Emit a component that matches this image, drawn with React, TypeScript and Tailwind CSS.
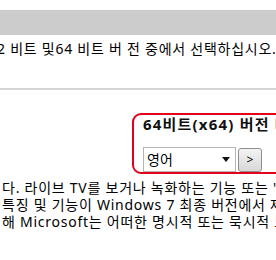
export default function App() {
  return (
    <div className="w-[276px] h-[260px] overflow-hidden bg-white text-black font-['Noto_Sans','Noto_Sans_CJK_KR',sans-serif]">
      <div className="h-[10px]" />
      <div className="h-[25px] bg-[#cccccc]" />
      <p className="mt-[5px] ml-[-3px] whitespace-nowrap text-[14px] leading-[17px] tracking-[0.75px]">
        2 비트 및64 비트 버 전 중에서 선택하십시오.
      </p>
      <div className="mt-[31px] h-[2px] bg-[#d4d4d4]" />
      <div className="mt-[23px] ml-[132px] w-[160px] h-[61px] rounded-[9px] border-2 border-[#e2001a] pl-[9px] pt-[1px]">
        <h3 className="whitespace-nowrap text-[15px] font-bold leading-[16px] tracking-[1.2px] text-[#111]">
          64비트(x64) 버전 다운로드
        </h3>
        <div className="mt-[15px] flex items-center gap-[2px]">
          <div className="flex h-[25px] w-[93px] items-center justify-between border border-[#b5b5b5] bg-white pl-[3px] pr-[5px] text-[14px]">
            <span>영어</span>
            <svg width="8" height="5" viewBox="0 0 8 5">
              <path d="M0 0h8L4 5z" fill="#111" />
            </svg>
          </div>
          <button className="flex h-[24px] w-[24px] items-center justify-center rounded-[3px] border border-[#8e8e8e] bg-gradient-to-b from-[#f4f4f4] to-[#d8d8d8] text-[12px] leading-none">
            &gt;
          </button>
        </div>
      </div>
      <div className="mt-[5px] ml-[2px] whitespace-nowrap text-[14px] leading-[17px] tracking-[0.75px]">
        <p>다. 라이브 TV를 보거나 녹화하는 기능 또는 '</p>
        <p>특징 및 기능이 Windows 7 최종 버전에서 제공되지</p>
        <p>해 Microsoft는 어떠한 명시적 또는 묵시적 보증도</p>
      </div>
    </div>
  );
}
